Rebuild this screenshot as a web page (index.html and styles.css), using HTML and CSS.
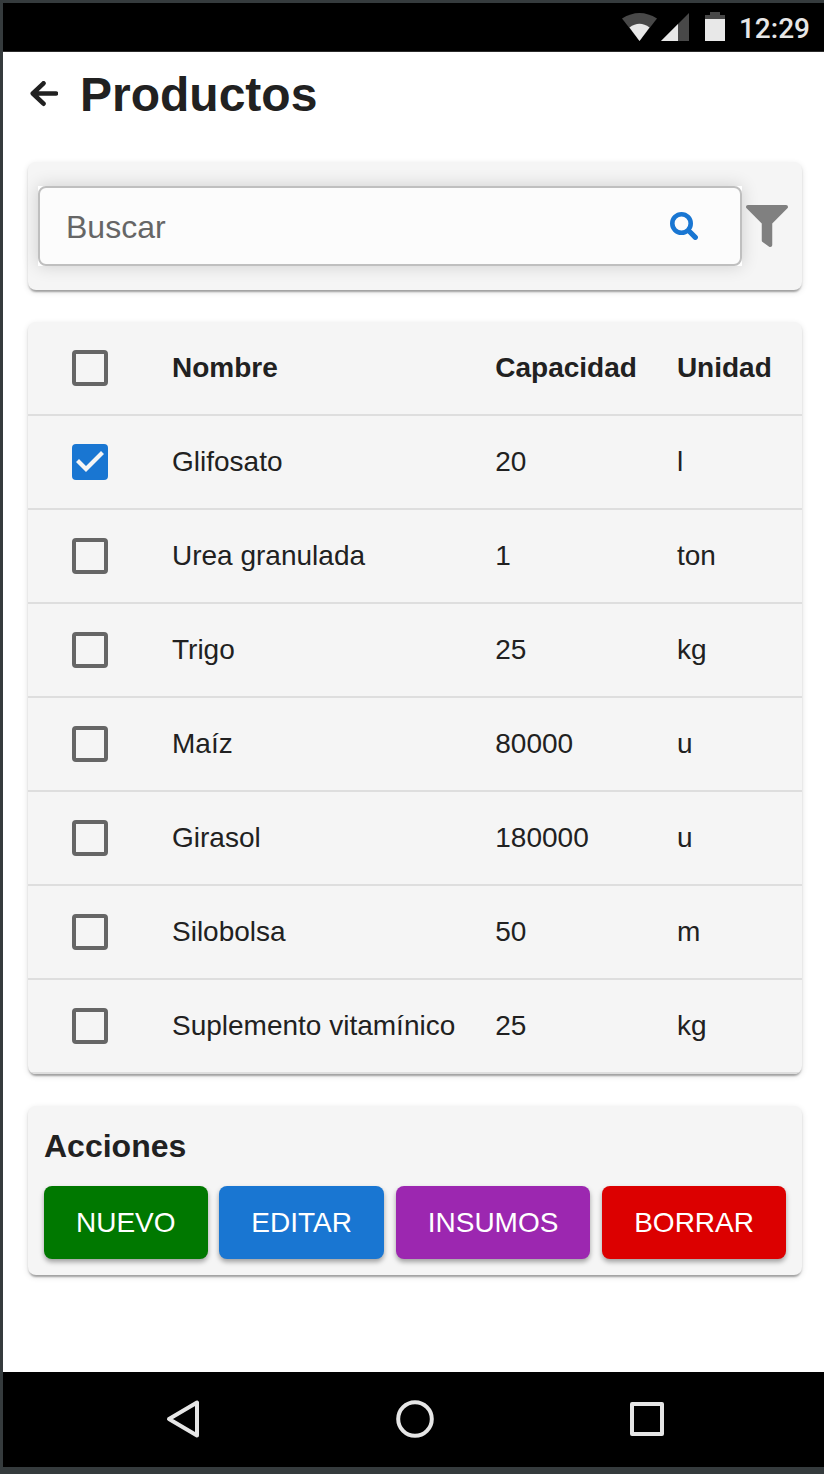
FILE: index.html
```html
<!DOCTYPE html>
<html lang="es">
<head>
<meta charset="utf-8">
<meta name="viewport" content="width=device-width, initial-scale=1">
<title>Productos</title>
<link rel="stylesheet" href="styles.css">
</head>
<body>
<div class="device">
  <div class="status-bar">
    <svg class="status-icons" width="104" height="30" viewBox="0 0 104 30" aria-hidden="true">
      <path fill="#484848" d="M0 6.500Q17.500-4.500 35 6.500L17.500 29z"/>
      <path fill="#e8e8e8" d="M7.500 15.500Q17.500 8 27.500 15.500L17.500 29z"/>
      <path fill="#484848" d="M67 1V29H39z"/>
      <path fill="#e8e8e8" d="M56 12V29H39z"/>
      <path fill="#484848" d="M88 0H98V3H103V8H83V3H88z"/>
      <path fill="#e8e8e8" d="M83 7H103V29H83z"/>
    </svg>
    <span class="clock">12:29</span>
  </div>

  <main class="page">
    <header class="page-header">
      <button class="icon-button" type="button" aria-label="Volver">
        <svg width="28" height="28" viewBox="0 0 28 28" fill="none" stroke="#212121" stroke-width="4.600" stroke-linecap="round" stroke-linejoin="round" aria-hidden="true"><path d="M13.500 2.300 2.800 12.500 13.500 22.700M3.500 12.500H26"/></svg>
      </button>
      <h1 class="page-title">Productos</h1>
    </header>

    <form class="card search-card" role="search">
      <div class="search-shell">
        <div class="search-field">
          <input class="search-input" type="text" placeholder="Buscar" aria-label="Buscar">
          <button class="icon-button" type="button" aria-label="Buscar productos">
            <svg width="28" height="28" viewBox="0 0 28 28" fill="none" stroke="#1976d2" aria-hidden="true"><circle cx="11.500" cy="11.500" r="9.200" stroke-width="4.600"/><path d="M18 18 22 22" stroke-width="4"/><path d="M20.500 20.500 25.300 25.300" stroke-width="5.200" stroke-linecap="round"/></svg>
          </button>
        </div>
      </div>
      <button class="icon-button" type="button" aria-label="Filtrar">
        <svg width="42" height="42" viewBox="0 0 512 512" fill="#808080" aria-hidden="true"><path d="M488 0H24C2.700 0-8 25.900 7.100 41L192 225.900V432c0 7.800 3.800 15.200 10.200 19.700l80 56C298 518.700 320 507.500 320 488V225.900L504.900 41C520 25.900 509.300 0 488 0z"/></svg>
      </button>
    </form>

    <section class="card table-card">
      <table class="products">
        <thead>
          <tr><th class="select-cell"><input class="check" type="checkbox" aria-label="Seleccionar todo"></th><th scope="col">Nombre</th><th scope="col">Capacidad</th><th scope="col">Unidad</th></tr>
        </thead>
        <tbody>
          <tr><td class="select-cell"><input class="check" type="checkbox" id="p1" checked></td><td><label for="p1">Glifosato</label></td><td>20</td><td>l</td></tr>
          <tr><td class="select-cell"><input class="check" type="checkbox" id="p2"></td><td><label for="p2">Urea granulada</label></td><td>1</td><td>ton</td></tr>
          <tr><td class="select-cell"><input class="check" type="checkbox" id="p3"></td><td><label for="p3">Trigo</label></td><td>25</td><td>kg</td></tr>
          <tr><td class="select-cell"><input class="check" type="checkbox" id="p4"></td><td><label for="p4">Maíz</label></td><td>80000</td><td>u</td></tr>
          <tr><td class="select-cell"><input class="check" type="checkbox" id="p5"></td><td><label for="p5">Girasol</label></td><td>180000</td><td>u</td></tr>
          <tr><td class="select-cell"><input class="check" type="checkbox" id="p6"></td><td><label for="p6">Silobolsa</label></td><td>50</td><td>m</td></tr>
          <tr><td class="select-cell"><input class="check" type="checkbox" id="p7"></td><td><label for="p7">Suplemento vitamínico</label></td><td>25</td><td>kg</td></tr>
        </tbody>
      </table>
    </section>

    <section class="card actions-card">
      <h2 class="card-title">Acciones</h2>
      <div class="actions">
        <button class="action action-new" type="button">NUEVO</button>
        <button class="action action-edit" type="button">EDITAR</button>
        <button class="action action-supplies" type="button">INSUMOS</button>
        <button class="action action-delete" type="button">BORRAR</button>
      </div>
    </section>
  </main>

  <nav class="nav-bar" aria-label="Sistema">
    <button class="nav-button" type="button" aria-label="Atrás">
      <svg width="40" height="40" viewBox="0 0 40 40" fill="none" stroke="#e6e6e6" stroke-width="4" stroke-linejoin="round" aria-hidden="true"><path d="M34 3.500V36.500L6 20z"/></svg>
    </button>
    <button class="nav-button" type="button" aria-label="Inicio">
      <svg width="40" height="40" viewBox="0 0 40 40" fill="none" stroke="#e6e6e6" stroke-width="4" aria-hidden="true"><circle cx="20" cy="20" r="16.800"/></svg>
    </button>
    <button class="nav-button" type="button" aria-label="Recientes">
      <svg width="40" height="40" viewBox="0 0 40 40" fill="none" stroke="#e6e6e6" stroke-width="4" stroke-linejoin="round" aria-hidden="true"><path d="M5 5H35V35H5z"/></svg>
    </button>
  </nav>
</div>
</body>
</html>
```
FILE: styles.css
```css
* {
  box-sizing: border-box;
}

body {
  margin: 0;
  font-family: "Liberation Sans", Arial, sans-serif;
  color: #212121;
  background: #fff;
}

button,
input {
  font: inherit;
  margin: 0;
}

.device {
  display: flex;
  flex-direction: column;
  min-height: 100vh;
  border: solid #353b3d;
  border-width: 3px 0 7px 3px;
}

.status-bar {
  display: flex;
  align-items: center;
  justify-content: flex-end;
  gap: 13px;
  height: 49px;
  padding-right: 14px;
  background: #000;
  border-bottom: 1px solid #2b2b2b;
}

.clock {
  padding-top: 4px;
  font: 500 28px/32px Roboto, sans-serif;
  color: #e6e6e6;
}

.page {
  flex: 1;
  display: flex;
  flex-direction: column;
  gap: 32px;
  padding: 14px 22px 32px 25px;
}

.page-header {
  display: flex;
  align-items: center;
  gap: 22px;
  padding: 0 2px 6px;
}

.page-title {
  margin: 0;
  font-size: 48px;
  line-height: 58px;
}

.icon-button {
  display: flex;
  padding: 0;
  border: 0;
  background: none;
  cursor: pointer;
}

.card {
  background: #f5f5f5;
  border-radius: 8px;
  box-shadow: 0 4px 2px -2px rgba(0, 0, 0, 0.2), 0 2px 2px rgba(0, 0, 0, 0.14), 0 2px 6px rgba(0, 0, 0, 0.12);
}

.search-card {
  display: flex;
  align-items: center;
  gap: 4px;
  padding: 24px 14px 24px 10px;
}

.search-shell {
  flex: 1;
  background: #fff;
  box-shadow: 0 0 16px rgba(0, 0, 0, 0.16);
}

.search-field {
  display: flex;
  align-items: center;
  height: 80px;
  padding: 0 42px 0 26px;
  background: #fcfcfc;
  border: 2px solid #bfbfbf;
  border-radius: 8px;
}

.search-input {
  flex: 1;
  min-width: 0;
  padding: 2px 0 0;
  border: 0;
  outline: 0;
  background: none;
  font-size: 32px;
  line-height: 40px;
  color: #212121;
}

.search-input::placeholder {
  color: #666;
  opacity: 1;
}

.table-card {
  overflow: hidden;
}

.products {
  width: 100%;
  border-collapse: separate;
  border-spacing: 0;
  font-size: 28px;
  line-height: 40px;
  text-align: left;
  white-space: nowrap;
}

.products th,
.products td {
  height: 94px;
  padding: 0 20px;
  border-bottom: 2px solid #dedede;
}

.products th:last-child,
.products td:last-child {
  padding-right: 31px;
}

.products .select-cell {
  width: 124px;
  padding: 0 44px;
}

.check {
  appearance: none;
  display: block;
  width: 36px;
  height: 36px;
  border: 4px solid #666;
  border-radius: 4px;
}

.check:checked {
  border: 0;
  background: #1976d2;
}

.check:checked::before {
  content: "";
  display: block;
  width: 36px;
  height: 36px;
  background: #f5f5f5;
  clip-path: polygon(14px 28px, 4px 18px, 7px 15px, 14px 22px, 29px 7px, 32px 10px);
}

.actions-card {
  padding: 16px;
}

.card-title {
  margin: 0 0 16px;
  font-size: 32px;
  line-height: 48px;
}

.actions {
  display: flex;
  justify-content: space-between;
}

.action {
  padding: 12px 32px;
  border: 0;
  border-radius: 8px;
  font-size: 28px;
  line-height: 49px;
  color: #fff;
  box-shadow: 0 3px 5px rgba(0, 0, 0, 0.35);
  cursor: pointer;
}

.action-new {
  background: #007800;
}

.action-edit {
  background: #1976d2;
}

.action-supplies {
  background: #9c27b0;
}

.action-delete {
  background: #dc0000;
}

.nav-bar {
  display: flex;
  justify-content: center;
  height: 95px;
  padding: 0 0 2px 2px;
  background: #000;
}

.nav-button {
  display: flex;
  align-items: center;
  justify-content: center;
  width: 232px;
  padding: 0;
  border: 0;
  background: none;
}
```
